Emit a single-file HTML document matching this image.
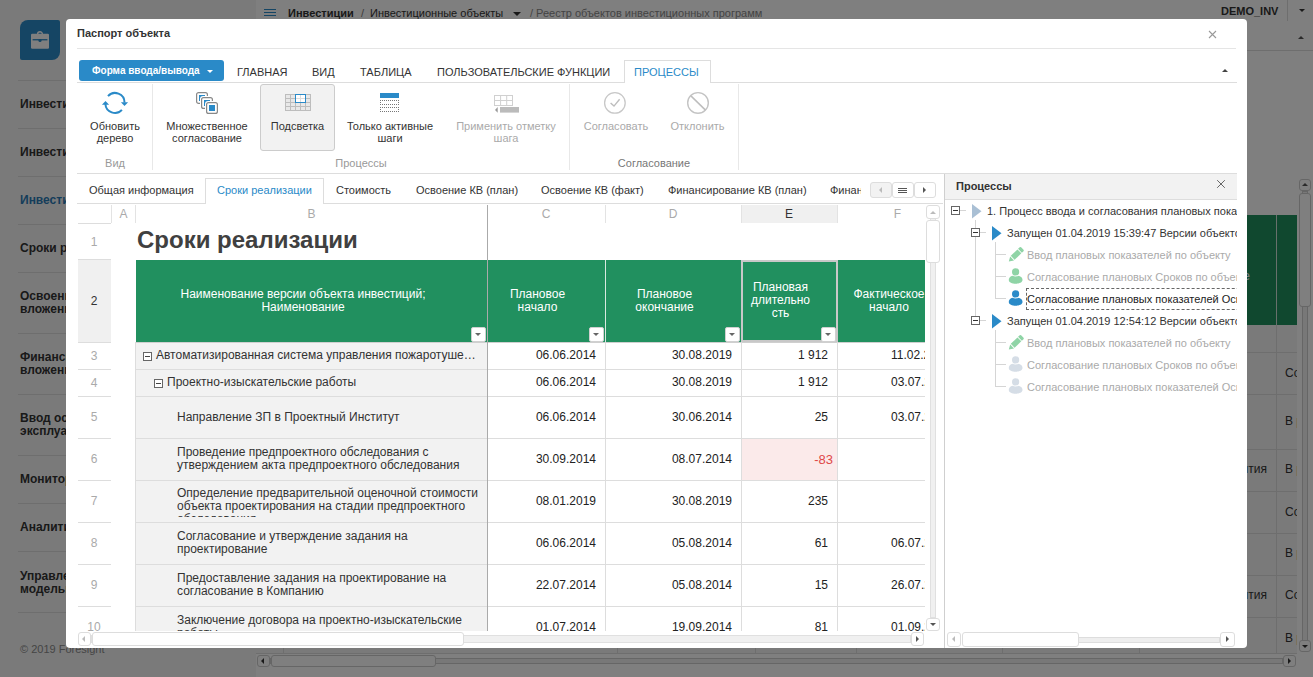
<!DOCTYPE html>
<html><head><meta charset="utf-8">
<style>
*{box-sizing:border-box;margin:0;padding:0}
html,body{width:1313px;height:677px;overflow:hidden;background:#fff;font-family:"Liberation Sans",sans-serif;color:#333}
.a{position:absolute}
.t{position:absolute;white-space:nowrap;font-size:11px;line-height:13px}
.b{font-weight:bold}
.hl{position:absolute;height:1px}
.vl{position:absolute;width:1px}
</style></head><body>
<!-- ============ BACKGROUND PAGE ============ -->
<div id="bg" class="a" style="left:0;top:0;width:1313px;height:677px">
  <div class="a" style="left:0;top:0;width:256px;height:677px;background:#f5f5f5"></div>
  <div class="a" style="left:20px;top:20px;width:40px;height:40px;background:#2a8ac8;border-radius:8px 2px 8px 2px"></div>
  <svg class="a" style="left:30px;top:30px" width="20" height="20" viewBox="0 0 20 20"><path d="M7.6 4.2A2.4 2.4 0 0 1 12.4 4.2" fill="none" stroke="#fff" stroke-width="1.4"/><rect x="1" y="3.7" width="18" height="15" rx="1.2" fill="#fff"/><rect x="2.6" y="9.1" width="14.8" height="1.3" fill="#2a8ac8"/><circle cx="10" cy="10.5" r="1.6" fill="#2a8ac8"/></svg>
  <div class="hl" style="left:18px;top:80px;width:238px;background:#ddd"></div>
  <div class="hl" style="left:18px;top:128px;width:238px;background:#ddd"></div>
  <div class="hl" style="left:18px;top:176px;width:238px;background:#ddd"></div>
  <div class="hl" style="left:18px;top:224px;width:238px;background:#ddd"></div>
  <div class="hl" style="left:18px;top:272px;width:238px;background:#ddd"></div>
  <div class="hl" style="left:18px;top:333px;width:238px;background:#ddd"></div>
  <div class="hl" style="left:18px;top:394px;width:238px;background:#ddd"></div>
  <div class="hl" style="left:18px;top:455px;width:238px;background:#ddd"></div>
  <div class="hl" style="left:18px;top:503px;width:238px;background:#ddd"></div>
  <div class="hl" style="left:18px;top:551px;width:238px;background:#ddd"></div>
  <div class="hl" style="left:18px;top:612px;width:238px;background:#ddd"></div>
  <div class="t b" style="left:20px;top:98px;font-size:12px">Инвестиционные программы</div>
  <div class="t b" style="left:20px;top:146px;font-size:12px">Инвестиционные проекты</div>
  <div class="t b" style="left:20px;top:194px;font-size:12px;color:#2a7ab5">Инвестиционные объекты</div>
  <div class="t b" style="left:20px;top:242px;font-size:12px">Сроки реализации</div>
  <div class="t b" style="left:20px;top:290px;font-size:12px">Освоение капитальных<br>вложений</div>
  <div class="t b" style="left:20px;top:351px;font-size:12px">Финансирование капитальных<br>вложений</div>
  <div class="t b" style="left:20px;top:412px;font-size:12px">Ввод основных фондов в<br>эксплуатацию</div>
  <div class="t b" style="left:20px;top:473px;font-size:12px">Мониторинг</div>
  <div class="t b" style="left:20px;top:521px;font-size:12px">Аналитика</div>
  <div class="t b" style="left:20px;top:570px;font-size:12px">Управление<br>моделью</div>
  <div class="t" style="left:20px;top:643px;font-size:11px;color:#8a8a8a">© 2019 Foresight</div>
  <!-- header -->
  <div class="hl" style="left:264px;top:9px;width:12px;height:1px;background:#2a8ac8"></div>
  <div class="hl" style="left:264px;top:12px;width:12px;height:1px;background:#2a8ac8"></div>
  <div class="hl" style="left:264px;top:15px;width:12px;height:1px;background:#2a8ac8"></div>
  <div class="t b" style="left:288px;top:7px">Инвестиции</div>
  <div class="t" style="left:361px;top:7px;color:#777">/</div>
  <div class="t" style="left:370px;top:7px">Инвестиционные объекты</div>
  <div class="a" style="left:513px;top:12px;border-left:4px solid transparent;border-right:4px solid transparent;border-top:4px solid #333"></div>
  <div class="t" style="left:530px;top:7px;color:#888">/ Реестр объектов инвестиционных программ</div>
  <div class="t b" style="left:1221px;top:5px">DEMO_INV</div>
  <div class="vl" style="left:1287px;top:0;height:21px;background:#ddd"></div>
  <div class="a" style="left:1299px;top:9px;border-left:3.5px solid transparent;border-right:3.5px solid transparent;border-top:3.5px solid #333"></div>
  <div class="a" style="left:1298px;top:36px;border-left:3.5px solid transparent;border-right:3.5px solid transparent;border-bottom:3.5px solid #555"></div>
  <div class="hl" style="left:256px;top:50px;width:1057px;background:#ddd"></div>
<!--BGT-->
<div class="a" style="left:256px;top:325px;width:1041px;height:328px;background:#f5f5f5"></div>
<div class="a" style="left:256px;top:215px;width:1041px;height:110px;background:#21905f"></div>
<div class="vl" style="left:1276px;top:215px;height:110px;background:#d0e0d8"></div>
<div class="vl" style="left:1276px;top:325px;height:328px;background:#ddd"></div>
<div class="vl" style="left:283px;top:325px;height:328px;background:#ddd"></div>
<div class="vl" style="left:617px;top:325px;height:328px;background:#ddd"></div>
<div class="vl" style="left:755px;top:325px;height:328px;background:#ddd"></div>
<div class="vl" style="left:856px;top:325px;height:328px;background:#ddd"></div>
<div class="vl" style="left:1002px;top:325px;height:328px;background:#ddd"></div>
<div class="vl" style="left:1139px;top:325px;height:328px;background:#ddd"></div>
<div class="hl" style="left:256px;top:352px;width:1041px;background:#ddd"></div>
<div class="hl" style="left:256px;top:394px;width:1041px;background:#ddd"></div>
<div class="hl" style="left:256px;top:449px;width:1041px;background:#ddd"></div>
<div class="hl" style="left:256px;top:491px;width:1041px;background:#ddd"></div>
<div class="hl" style="left:256px;top:533px;width:1041px;background:#ddd"></div>
<div class="hl" style="left:256px;top:575px;width:1041px;background:#ddd"></div>
<div class="hl" style="left:256px;top:617px;width:1041px;background:#ddd"></div>
<div class="hl" style="left:256px;top:653px;width:1041px;background:#ddd"></div>
<div class="a" style="left:1100px;top:269px;width:176px;height:14px;overflow:hidden"><div class="t" style="right:26px;top:0;font-size:12px;line-height:14px;color:#fff">Фактическое</div></div>
<div class="a" style="left:1277px;top:325px;width:20px;height:328px;overflow:hidden">
<div class="t" style="left:8px;top:41px;font-size:12px;line-height:14px;color:#333">Согласование</div>
<div class="t" style="left:8px;top:89px;font-size:12px;line-height:14px;color:#333">В работе</div>
<div class="t" style="left:8px;top:137px;font-size:12px;line-height:14px;color:#333">В работе</div>
<div class="t" style="left:8px;top:180px;font-size:12px;line-height:14px;color:#333">Согласование</div>
<div class="t" style="left:8px;top:221px;font-size:12px;line-height:14px;color:#333">В работе</div>
<div class="t" style="left:8px;top:263px;font-size:12px;line-height:14px;color:#333">Согласование</div>
<div class="t" style="left:8px;top:306px;font-size:12px;line-height:14px;color:#333">В работе</div>
</div>
<div class="a" style="left:1100px;top:325px;width:176px;height:328px;overflow:hidden">
<div class="t" style="right:9px;top:137px;font-size:12px;line-height:14px;color:#333">Ввод объекта развития</div>
<div class="t" style="right:9px;top:263px;font-size:12px;line-height:14px;color:#333">Ввод объекта развития</div>
</div>
<div class="a" style="left:1299px;top:179px;width:12px;height:473px">
<div class="a" style="left:3px;top:12px;width:6px;height:450px;background:#f0f0f0;border:1px solid #ccc"></div>
<div class="a" style="left:0;top:0;width:12px;height:12px;background:#fff;border:1px solid #ccc;border-radius:3px"></div>
<div class="a" style="left:0;top:14px;width:12px;height:114px;background:#fff;border:1px solid #ccc;border-radius:3px"></div>
<div class="a" style="left:0;top:461px;width:12px;height:12px;background:#fff;border:1px solid #ccc;border-radius:3px"></div>
<div class="a" style="left:3px;top:4px;border-left:3px solid transparent;border-right:3px solid transparent;border-bottom:3px solid #555"></div>
<div class="a" style="left:3px;top:466px;border-left:3px solid transparent;border-right:3px solid transparent;border-top:3px solid #333"></div>
</div>
<div class="a" style="left:257px;top:655px;width:1039px;height:12px">
<div class="a" style="left:13px;top:3px;width:1013px;height:6px;background:#f0f0f0;border:1px solid #ccc"></div>
<div class="a" style="left:0;top:0;width:13px;height:12px;background:#fff;border:1px solid #ccc;border-radius:3px"></div>
<div class="a" style="left:14px;top:0;width:165px;height:12px;background:#fff;border:1px solid #ccc;border-radius:3px"></div>
<div class="a" style="left:1026px;top:0;width:13px;height:12px;background:#fff;border:1px solid #ccc;border-radius:3px"></div>
<div class="a" style="left:4px;top:3px;border-top:3px solid transparent;border-bottom:3px solid transparent;border-right:3px solid #333"></div>
<div class="a" style="left:1031px;top:3px;border-top:3px solid transparent;border-bottom:3px solid transparent;border-left:3px solid #333"></div>
</div>
<!--/BGT-->
</div>
<div class="a" style="left:0;top:0;width:1313px;height:677px;background:rgba(0,0,0,.5)"></div>

<!-- ============ MODAL ============ -->

<div id="modal" class="a" style="left:66px;top:19px;width:1181px;height:629px;background:#fff;border-radius:4px;overflow:hidden"></div>
<div id="mc" class="a" style="left:0;top:0;width:1247px;height:648px;overflow:hidden">
  <div class="t b" style="left:77px;top:27px">Паспорт объекта</div>
  <svg class="a" style="left:1208px;top:30px" width="9" height="9" viewBox="0 0 9 9"><path d="M1 1L8 8M8 1L1 8" stroke="#999" stroke-width="1.1"/></svg>
  <div class="hl" style="left:77px;top:48px;width:1159px;background:#e5e5e5"></div>
  <!-- form button -->
  <div class="a" style="left:79px;top:60px;width:145px;height:21px;background:#2a8ac8;border-radius:3px"></div>
  <div class="t b" style="left:92px;top:64px;font-size:10px;color:#fff">Форма ввода/вывода</div>
  <div class="a" style="left:207px;top:70px;border-left:3.5px solid transparent;border-right:3.5px solid transparent;border-top:3.5px solid #fff"></div>
  <!-- ribbon tabs -->
  <div class="a" style="left:624px;top:60px;width:87px;height:23px;background:#fff;border:1px solid #ddd;border-bottom:none"></div>
  <div class="hl" style="left:77px;top:82px;width:547px;background:#ddd"></div>
  <div class="hl" style="left:711px;top:82px;width:526px;background:#ddd"></div>
  <div class="t" style="left:237px;top:66px">ГЛАВНАЯ</div>
  <div class="t" style="left:312px;top:66px">ВИД</div>
  <div class="t" style="left:360px;top:66px">ТАБЛИЦА</div>
  <div class="t" style="left:437px;top:66px">ПОЛЬЗОВАТЕЛЬСКИЕ ФУНКЦИИ</div>
  <div class="t" style="left:634px;top:66px;color:#2a8ac8">ПРОЦЕССЫ</div>
  <div class="a" style="left:1222px;top:69px;border-left:3.2px solid transparent;border-right:3.2px solid transparent;border-bottom:3.2px solid #444"></div>
  <!-- ribbon -->
  <div class="vl" style="left:152px;top:84px;height:86px;background:#e8e8e8"></div>
  <div class="vl" style="left:569px;top:84px;height:86px;background:#e8e8e8"></div>
  <div class="vl" style="left:738px;top:84px;height:86px;background:#e8e8e8"></div>
  <div class="hl" style="left:77px;top:173px;width:1160px;background:#ddd"></div>
  <div class="a" style="left:260px;top:84px;width:75px;height:67px;background:#f2f2f2;border:1px solid #ccc;border-radius:3px"></div>
  <div class="t" style="left:76px;top:120px;width:78px;text-align:center;line-height:12px">Обновить<br>дерево</div>
  <div class="t" style="left:157px;top:120px;width:100px;text-align:center;line-height:12px">Множественное<br>согласование</div>
  <div class="t" style="left:260px;top:120px;width:75px;text-align:center;line-height:12px">Подсветка</div>
  <div class="t" style="left:340px;top:120px;width:100px;text-align:center;line-height:12px">Только активные<br>шаги</div>
  <div class="t" style="left:450px;top:120px;width:112px;text-align:center;line-height:12px;color:#aaa">Применить отметку<br>шага</div>
  <div class="t" style="left:576px;top:120px;width:80px;text-align:center;line-height:12px;color:#aaa">Согласовать</div>
  <div class="t" style="left:660px;top:120px;width:75px;text-align:center;line-height:12px;color:#aaa">Отклонить</div>
  <div class="t" style="left:76px;top:157px;width:78px;text-align:center;color:#999">Вид</div>
  <div class="t" style="left:311px;top:157px;width:100px;text-align:center;color:#999">Процессы</div>
  <div class="t" style="left:604px;top:157px;width:100px;text-align:center;color:#777">Согласование</div>
  <!-- icons -->
  <svg class="a" style="left:98px;top:88px" width="34" height="30" viewBox="0 0 34 30">
    <path d="M10 8.1A9.5 9.5 0 0 1 26.5 14.6" fill="none" stroke="#2a8ac8" stroke-width="2"/>
    <path d="M22.9 14.3H30.1L26.5 18Z" fill="#2a8ac8"/>
    <path d="M23.9 21.8A9.5 9.5 0 0 1 7.4 16" fill="none" stroke="#2a8ac8" stroke-width="2"/>
    <path d="M3.9 16.7H11.1L7.5 13Z" fill="#2a8ac8"/>
  </svg>
  <svg class="a" style="left:195px;top:91px" width="24" height="24" viewBox="0 0 24 24"><rect x="1.6" y="1.6" width="10.8" height="10.8" rx="2" fill="#fff" stroke="#888" stroke-width="1.2"/><rect x="4" y="4" width="6" height="6" fill="#2a8ac8"/><rect x="5" y="5" width="14" height="14" rx="3" fill="#fff"/><rect x="6.6" y="6.6" width="10.8" height="10.8" rx="2" fill="#fff" stroke="#888" stroke-width="1.2"/><rect x="9" y="9" width="6" height="6" fill="#2a8ac8"/><rect x="10" y="10" width="14" height="14" rx="3" fill="#fff"/><rect x="11.6" y="11.6" width="10.8" height="10.8" rx="2" fill="#fff" stroke="#888" stroke-width="1.2"/><rect x="14" y="14" width="6" height="6" fill="#2a8ac8"/></svg>
  <svg class="a" style="left:285px;top:94px" width="27" height="18" viewBox="0 0 27 18">
    <rect x="0" y="0" width="26" height="17" fill="#bdbdbd"/>
    <g fill="#e8e8e8">
      <rect x="1" y="1" width="4" height="3"/><rect x="6" y="1" width="4" height="3"/><rect x="11" y="1" width="4" height="3"/><rect x="16" y="1" width="4" height="3"/><rect x="21" y="1" width="4" height="3"/>
      <rect x="1" y="5" width="4" height="3"/><rect x="6" y="5" width="4" height="3"/><rect x="11" y="5" width="4" height="3"/><rect x="16" y="5" width="4" height="3"/><rect x="21" y="5" width="4" height="3"/>
      <rect x="1" y="9" width="4" height="3"/><rect x="6" y="9" width="4" height="3"/><rect x="11" y="9" width="4" height="3"/><rect x="16" y="9" width="4" height="3"/><rect x="21" y="9" width="4" height="3"/>
      <rect x="1" y="13" width="4" height="3"/><rect x="6" y="13" width="4" height="3"/><rect x="11" y="13" width="4" height="3"/><rect x="16" y="13" width="4" height="3"/><rect x="21" y="13" width="4" height="3"/>
    </g>
    <rect x="10.5" y="0.5" width="10" height="8" fill="#fff" stroke="#2a8ac8"/>
    <path d="M15.5 1V8M11 4.5H20" stroke="#ddd"/>
  </svg>
  <svg class="a" style="left:380px;top:93px" width="20" height="20" viewBox="0 0 20 20"><rect x="0" y="0" width="19" height="5" fill="#2a8ac8"/><g fill="#777"><rect x="0" y="7" width="1" height="1"/><rect x="2" y="7" width="1" height="1"/><rect x="4" y="7" width="1" height="1"/><rect x="6" y="7" width="1" height="1"/><rect x="8" y="7" width="1" height="1"/><rect x="10" y="7" width="1" height="1"/><rect x="12" y="7" width="1" height="1"/><rect x="14" y="7" width="1" height="1"/><rect x="16" y="7" width="1" height="1"/><rect x="18" y="7" width="1" height="1"/><rect x="0" y="11" width="1" height="1"/><rect x="2" y="11" width="1" height="1"/><rect x="4" y="11" width="1" height="1"/><rect x="6" y="11" width="1" height="1"/><rect x="8" y="11" width="1" height="1"/><rect x="10" y="11" width="1" height="1"/><rect x="12" y="11" width="1" height="1"/><rect x="14" y="11" width="1" height="1"/><rect x="16" y="11" width="1" height="1"/><rect x="18" y="11" width="1" height="1"/><rect x="0" y="14" width="1" height="1"/><rect x="2" y="14" width="1" height="1"/><rect x="4" y="14" width="1" height="1"/><rect x="6" y="14" width="1" height="1"/><rect x="8" y="14" width="1" height="1"/><rect x="10" y="14" width="1" height="1"/><rect x="12" y="14" width="1" height="1"/><rect x="14" y="14" width="1" height="1"/><rect x="16" y="14" width="1" height="1"/><rect x="18" y="14" width="1" height="1"/><rect x="0" y="18" width="1" height="1"/><rect x="2" y="18" width="1" height="1"/><rect x="4" y="18" width="1" height="1"/><rect x="6" y="18" width="1" height="1"/><rect x="8" y="18" width="1" height="1"/><rect x="10" y="18" width="1" height="1"/><rect x="12" y="18" width="1" height="1"/><rect x="14" y="18" width="1" height="1"/><rect x="16" y="18" width="1" height="1"/><rect x="18" y="18" width="1" height="1"/><rect x="0" y="9" width="1" height="1"/><rect x="18" y="9" width="1" height="1"/><rect x="0" y="16" width="1" height="1"/><rect x="18" y="16" width="1" height="1"/></g></svg>
  <svg class="a" style="left:493px;top:94px" width="27" height="20" viewBox="0 0 27 20"><g fill="none" stroke="#d0d0d0"><rect x="1.5" y="1.5" width="18" height="10"/><path d="M7.6 2V11M13.7 2V11M2 6.5H19"/></g><rect x="7" y="13" width="19" height="5.6" fill="#bbb"/><path d="M4.7 13V18.8L2 15.9Z" fill="#999"/></svg>
  <svg class="a" style="left:600px;top:89px" width="30" height="28" viewBox="0 0 30 28"><circle cx="14.9" cy="13.9" r="10.3" fill="none" stroke="#c8c8c8" stroke-width="1.3"/><path d="M10.6 14L14 17.1L19.6 10.2" fill="none" stroke="#bdbdbd" stroke-width="1.4"/></svg>
  <svg class="a" style="left:683px;top:89px" width="30" height="28" viewBox="0 0 30 28"><circle cx="15" cy="13.9" r="10.3" fill="none" stroke="#c4c4c4" stroke-width="1.4"/><path d="M7.9 6.9L22.5 21.1" stroke="#bdbdbd" stroke-width="1.5"/></svg>
  <!-- sheet tabs -->
  <div class="a" style="left:205px;top:178px;width:119px;height:26px;background:#fff;border:1px solid #ddd;border-bottom:none"></div>
  <div class="hl" style="left:77px;top:203px;width:128px;background:#ddd"></div>
  <div class="hl" style="left:324px;top:203px;width:619px;background:#ddd"></div>
  <div class="t" style="left:89px;top:184px">Общая информация</div>
  <div class="t" style="left:217px;top:184px;color:#2a8ac8">Сроки реализации</div>
  <div class="t" style="left:336px;top:184px">Стоимость</div>
  <div class="t" style="left:416px;top:184px">Освоение КВ (план)</div>
  <div class="t" style="left:541px;top:184px">Освоение КВ (факт)</div>
  <div class="t" style="left:668px;top:184px">Финансирование КВ (план)</div>
  <div class="a" style="left:830px;top:180px;width:31px;height:20px;overflow:hidden"><div class="t" style="left:0;top:4px">Финансирование КВ (факт)</div></div>
  <div class="a" style="left:870px;top:182px;width:22px;height:16px;background:#f2f2f2;border:1px solid #ddd;border-radius:3px"></div>
  <div class="a" style="left:892px;top:182px;width:22px;height:16px;background:#fff;border:1px solid #ddd;border-radius:3px"></div>
  <div class="a" style="left:914px;top:182px;width:22px;height:16px;background:#fff;border:1px solid #ddd;border-radius:3px"></div>
  <div class="a" style="left:879px;top:187px;border-top:3px solid transparent;border-bottom:3px solid transparent;border-right:3px solid #bbb"></div>
  <div class="hl" style="left:898px;top:188px;width:9px;height:1px;background:#555"></div>
  <div class="hl" style="left:898px;top:190px;width:9px;height:1px;background:#555"></div>
  <div class="hl" style="left:898px;top:192px;width:9px;height:1px;background:#555"></div>
  <div class="a" style="left:923px;top:187px;border-top:3px solid transparent;border-bottom:3px solid transparent;border-left:3px solid #555"></div>
<!--GRID-->
<div class="a" style="left:77px;top:204px;width:848px;height:427px;overflow:hidden">
<div class="a" style="left:664px;top:1px;width:96px;height:18px;background:#f0f0f0"></div>
<div class="a" style="left:1px;top:19px;width:33px;height:1px;background:#ddd"></div>
<div class="a" style="left:34px;top:1px;width:1px;height:18px;background:#e3e3e3"></div>
<div class="a" style="left:58px;top:1px;width:1px;height:18px;background:#e3e3e3"></div>
<div class="a" style="left:528px;top:1px;width:1px;height:18px;background:#e3e3e3"></div>
<div class="a" style="left:664px;top:1px;width:1px;height:18px;background:#e3e3e3"></div>
<div class="a" style="left:760px;top:1px;width:1px;height:18px;background:#e3e3e3"></div>
<div class="t" style="left:34px;top:3px;width:25px;text-align:center;font-size:12px;line-height:14px;color:#aaa">A</div>
<div class="t" style="left:59px;top:3px;width:351px;text-align:center;font-size:12px;line-height:14px;color:#aaa">B</div>
<div class="t" style="left:410px;top:3px;width:118px;text-align:center;font-size:12px;line-height:14px;color:#aaa">C</div>
<div class="t" style="left:528px;top:3px;width:136px;text-align:center;font-size:12px;line-height:14px;color:#aaa">D</div>
<div class="t" style="left:664px;top:3px;width:96px;text-align:center;font-size:12px;line-height:14px;color:#333">E</div>
<div class="t" style="left:760px;top:3px;width:121px;text-align:center;font-size:12px;line-height:14px;color:#aaa">F</div>
<div class="a" style="left:1px;top:56px;width:33px;height:82px;background:#f0f0f0"></div>
<div class="t" style="left:0px;top:31px;width:34px;text-align:center;font-size:12px;line-height:14px;color:#aaa">1</div>
<div class="a" style="left:1px;top:55px;width:33px;height:1px;background:#ddd"></div>
<div class="t" style="left:0px;top:90px;width:34px;text-align:center;font-size:12px;line-height:14px;color:#333">2</div>
<div class="a" style="left:1px;top:138px;width:33px;height:1px;background:#ddd"></div>
<div class="t" style="left:0px;top:145px;width:34px;text-align:center;font-size:12px;line-height:14px;color:#aaa">3</div>
<div class="a" style="left:1px;top:165px;width:33px;height:1px;background:#ddd"></div>
<div class="t" style="left:0px;top:172px;width:34px;text-align:center;font-size:12px;line-height:14px;color:#aaa">4</div>
<div class="a" style="left:1px;top:192px;width:33px;height:1px;background:#ddd"></div>
<div class="t" style="left:0px;top:206px;width:34px;text-align:center;font-size:12px;line-height:14px;color:#aaa">5</div>
<div class="a" style="left:1px;top:234px;width:33px;height:1px;background:#ddd"></div>
<div class="t" style="left:0px;top:248px;width:34px;text-align:center;font-size:12px;line-height:14px;color:#aaa">6</div>
<div class="a" style="left:1px;top:276px;width:33px;height:1px;background:#ddd"></div>
<div class="t" style="left:0px;top:290px;width:34px;text-align:center;font-size:12px;line-height:14px;color:#aaa">7</div>
<div class="a" style="left:1px;top:318px;width:33px;height:1px;background:#ddd"></div>
<div class="t" style="left:0px;top:332px;width:34px;text-align:center;font-size:12px;line-height:14px;color:#aaa">8</div>
<div class="a" style="left:1px;top:360px;width:33px;height:1px;background:#ddd"></div>
<div class="t" style="left:0px;top:374px;width:34px;text-align:center;font-size:12px;line-height:14px;color:#aaa">9</div>
<div class="a" style="left:1px;top:402px;width:33px;height:1px;background:#ddd"></div>
<div class="t" style="left:0px;top:416px;width:34px;text-align:center;font-size:12px;line-height:14px;color:#aaa">10</div>
<div class="a" style="left:1px;top:444px;width:33px;height:1px;background:#ddd"></div>
<div class="a" style="left:59px;top:138px;width:351px;height:306px;background:#f2f2f2"></div>
<div class="a" style="left:59px;top:56px;width:789px;height:82px;background:#21905f"></div>
<div class="a" style="left:59px;top:165px;width:789px;height:1px;background:#ddd"></div>
<div class="a" style="left:59px;top:192px;width:789px;height:1px;background:#ddd"></div>
<div class="a" style="left:59px;top:234px;width:789px;height:1px;background:#ddd"></div>
<div class="a" style="left:59px;top:276px;width:789px;height:1px;background:#ddd"></div>
<div class="a" style="left:59px;top:318px;width:789px;height:1px;background:#ddd"></div>
<div class="a" style="left:59px;top:360px;width:789px;height:1px;background:#ddd"></div>
<div class="a" style="left:59px;top:402px;width:789px;height:1px;background:#ddd"></div>
<div class="a" style="left:59px;top:444px;width:789px;height:1px;background:#ddd"></div>
<div class="a" style="left:59px;top:138px;width:789px;height:1px;background:#cfcfcf"></div>
<div class="a" style="left:528px;top:56px;width:1px;height:82px;background:#d8e8e0"></div>
<div class="a" style="left:528px;top:138px;width:1px;height:306px;background:#ddd"></div>
<div class="a" style="left:664px;top:56px;width:1px;height:82px;background:#d8e8e0"></div>
<div class="a" style="left:664px;top:138px;width:1px;height:306px;background:#ddd"></div>
<div class="a" style="left:760px;top:56px;width:1px;height:82px;background:#d8e8e0"></div>
<div class="a" style="left:760px;top:138px;width:1px;height:306px;background:#ddd"></div>
<div class="a" style="left:58px;top:138px;width:1px;height:306px;background:#ddd"></div>
<div class="a" style="left:410px;top:1px;width:1px;height:443px;background:#aaa"></div>
<div class="a" style="left:664px;top:56px;width:97px;height:82px;border:2px solid #c8c8c8"></div>
<div class="t" style="left:59px;top:84px;width:334px;color:#fff;font-size:12px;line-height:13px;text-align:center">Наименование версии объекта инвестиций;<br>Наименование</div>
<div class="t" style="left:410px;top:84px;width:101px;color:#fff;font-size:12px;line-height:13px;text-align:center">Плановое<br>начало</div>
<div class="t" style="left:528px;top:84px;width:119px;color:#fff;font-size:12px;line-height:13px;text-align:center">Плановое<br>окончание</div>
<div class="t" style="left:664px;top:77px;width:79px;color:#fff;font-size:12px;line-height:13px;text-align:center">Плановая<br>длительно<br>сть</div>
<div class="t" style="left:760px;top:84px;width:104px;color:#fff;font-size:12px;line-height:13px;text-align:center">Фактическое<br>начало</div>
<div class="a" style="left:394px;top:123px;width:15px;height:15px;background:#fff;border:1px solid #d0d0d0;border-radius:2px"></div>
<div class="a" style="left:398px;top:129px;border-left:3.5px solid transparent;border-right:3.5px solid transparent;border-top:3.5px solid #666"></div>
<div class="a" style="left:512px;top:123px;width:15px;height:15px;background:#fff;border:1px solid #d0d0d0;border-radius:2px"></div>
<div class="a" style="left:516px;top:129px;border-left:3.5px solid transparent;border-right:3.5px solid transparent;border-top:3.5px solid #666"></div>
<div class="a" style="left:648px;top:123px;width:15px;height:15px;background:#fff;border:1px solid #d0d0d0;border-radius:2px"></div>
<div class="a" style="left:652px;top:129px;border-left:3.5px solid transparent;border-right:3.5px solid transparent;border-top:3.5px solid #666"></div>
<div class="a" style="left:744px;top:123px;width:15px;height:15px;background:#fff;border:1px solid #d0d0d0;border-radius:2px"></div>
<div class="a" style="left:748px;top:129px;border-left:3.5px solid transparent;border-right:3.5px solid transparent;border-top:3.5px solid #666"></div>
<div class="t" style="left:60px;top:22px;font-size:24px;line-height:28px;font-weight:bold;color:#404040">Сроки реализации</div>
<div class="a" style="left:66px;top:148px;width:9px;height:9px;border:1px solid #666;background:#fff"></div>
<div class="a" style="left:68px;top:152px;width:5px;height:1px;background:#444"></div>
<div class="t" style="left:79px;top:145px;font-size:12px;line-height:13px;color:#333">Автоматизированная система управления пожаротуше…</div>
<div class="t" style="left:410px;top:144px;width:109px;text-align:right;font-size:12px;line-height:14px;color:#222">06.06.2014</div>
<div class="t" style="left:528px;top:144px;width:127px;text-align:right;font-size:12px;line-height:14px;color:#222">30.08.2019</div>
<div class="t" style="left:664px;top:144px;width:87px;text-align:right;font-size:12px;line-height:14px;color:#222">1 912</div>
<div class="a" style="left:760px;top:144px;width:88px;height:14px;overflow:hidden"><div class="t" style="left:54px;top:0;font-size:12px;line-height:14px;color:#222">11.02.2019</div></div>
<div class="a" style="left:77px;top:175px;width:9px;height:9px;border:1px solid #666;background:#fff"></div>
<div class="a" style="left:79px;top:179px;width:5px;height:1px;background:#444"></div>
<div class="t" style="left:90px;top:172px;font-size:12px;line-height:13px;color:#333">Проектно-изыскательские работы</div>
<div class="t" style="left:410px;top:171px;width:109px;text-align:right;font-size:12px;line-height:14px;color:#222">06.06.2014</div>
<div class="t" style="left:528px;top:171px;width:127px;text-align:right;font-size:12px;line-height:14px;color:#222">30.08.2019</div>
<div class="t" style="left:664px;top:171px;width:87px;text-align:right;font-size:12px;line-height:14px;color:#222">1 912</div>
<div class="a" style="left:760px;top:171px;width:88px;height:14px;overflow:hidden"><div class="t" style="left:54px;top:0;font-size:12px;line-height:14px;color:#222">03.07.2014</div></div>
<div class="t" style="left:100px;top:207px;font-size:12px;line-height:13px;color:#333">Направление ЗП в Проектный Институт</div>
<div class="t" style="left:410px;top:206px;width:109px;text-align:right;font-size:12px;line-height:14px;color:#222">06.06.2014</div>
<div class="t" style="left:528px;top:206px;width:127px;text-align:right;font-size:12px;line-height:14px;color:#222">30.06.2014</div>
<div class="t" style="left:664px;top:206px;width:87px;text-align:right;font-size:12px;line-height:14px;color:#222">25</div>
<div class="a" style="left:760px;top:206px;width:88px;height:14px;overflow:hidden"><div class="t" style="left:54px;top:0;font-size:12px;line-height:14px;color:#222">03.07.2014</div></div>
<div class="t" style="left:100px;top:242px;font-size:12px;line-height:13px;color:#333">Проведение предпроектного обследования с<br>утверждением акта предпроектного обследования</div>
<div class="a" style="left:665px;top:235px;width:95px;height:41px;background:#fbeaea"></div>
<div class="t" style="left:410px;top:248px;width:109px;text-align:right;font-size:12px;line-height:14px;color:#222">30.09.2014</div>
<div class="t" style="left:528px;top:248px;width:127px;text-align:right;font-size:12px;line-height:14px;color:#222">08.07.2014</div>
<div class="t" style="left:664px;top:249px;width:92px;text-align:right;font-size:13px;line-height:14px;color:#e04848">-83</div>
<div class="a" style="left:100px;top:279px;width:305px;height:34px;overflow:hidden"><div class="t" style="left:0;top:4px;font-size:12px;line-height:13px;color:#333">Определение предварительной оценочной стоимости<br>объекта проектирования на стадии предпроектного<br>обследования</div></div>
<div class="t" style="left:410px;top:290px;width:109px;text-align:right;font-size:12px;line-height:14px;color:#222">08.01.2019</div>
<div class="t" style="left:528px;top:290px;width:127px;text-align:right;font-size:12px;line-height:14px;color:#222">30.08.2019</div>
<div class="t" style="left:664px;top:290px;width:87px;text-align:right;font-size:12px;line-height:14px;color:#222">235</div>
<div class="t" style="left:100px;top:326px;font-size:12px;line-height:13px;color:#333">Согласование и утверждение задания на<br>проектирование</div>
<div class="t" style="left:410px;top:332px;width:109px;text-align:right;font-size:12px;line-height:14px;color:#222">06.06.2014</div>
<div class="t" style="left:528px;top:332px;width:127px;text-align:right;font-size:12px;line-height:14px;color:#222">05.08.2014</div>
<div class="t" style="left:664px;top:332px;width:87px;text-align:right;font-size:12px;line-height:14px;color:#222">61</div>
<div class="a" style="left:760px;top:332px;width:88px;height:14px;overflow:hidden"><div class="t" style="left:54px;top:0;font-size:12px;line-height:14px;color:#222">06.07.2014</div></div>
<div class="t" style="left:100px;top:368px;font-size:12px;line-height:13px;color:#333">Предоставление задания на проектирование на<br>согласование в Компанию</div>
<div class="t" style="left:410px;top:374px;width:109px;text-align:right;font-size:12px;line-height:14px;color:#222">22.07.2014</div>
<div class="t" style="left:528px;top:374px;width:127px;text-align:right;font-size:12px;line-height:14px;color:#222">05.08.2014</div>
<div class="t" style="left:664px;top:374px;width:87px;text-align:right;font-size:12px;line-height:14px;color:#222">15</div>
<div class="a" style="left:760px;top:374px;width:88px;height:14px;overflow:hidden"><div class="t" style="left:54px;top:0;font-size:12px;line-height:14px;color:#222">26.07.2014</div></div>
<div class="t" style="left:100px;top:410px;font-size:12px;line-height:13px;color:#333">Заключение договора на проектно-изыскательские<br>работы</div>
<div class="t" style="left:410px;top:416px;width:109px;text-align:right;font-size:12px;line-height:14px;color:#222">01.07.2014</div>
<div class="t" style="left:528px;top:416px;width:127px;text-align:right;font-size:12px;line-height:14px;color:#222">19.09.2014</div>
<div class="t" style="left:664px;top:416px;width:87px;text-align:right;font-size:12px;line-height:14px;color:#222">81</div>
<div class="a" style="left:760px;top:416px;width:88px;height:14px;overflow:hidden"><div class="t" style="left:54px;top:0;font-size:12px;line-height:14px;color:#222">01.09.2014</div></div>
</div>
<div class="a" style="left:926px;top:205px;width:14px;height:426px;">
<div class="a" style="left:4px;top:13px;width:6px;height:400px;background:#f0f0f0;border:1px solid #e0e0e0"></div>
<div class="a" style="left:0;top:0;width:14px;height:14px;background:#fff;border:1px solid #ddd;border-radius:3px"></div>
<div class="a" style="left:0;top:15px;width:14px;height:43px;background:#fff;border:1px solid #ddd;border-radius:3px"></div>
<div class="a" style="left:0;top:413px;width:14px;height:13px;background:#fff;border:1px solid #ddd;border-radius:3px"></div>
<div class="a" style="left:4px;top:6px;border-left:3px solid transparent;border-right:3px solid transparent;border-bottom:3px solid #bbb"></div>
<div class="a" style="left:4px;top:418px;border-left:3px solid transparent;border-right:3px solid transparent;border-top:3px solid #555"></div>
</div>
<div class="a" style="left:78px;top:632px;width:846px;height:14px;">
<div class="a" style="left:13px;top:3px;width:820px;height:8px;background:#f0f0f0;border:1px solid #e0e0e0"></div>
<div class="a" style="left:0;top:0;width:13px;height:14px;background:#fff;border:1px solid #ddd;border-radius:3px"></div>
<div class="a" style="left:14px;top:0;width:372px;height:14px;background:#fff;border:1px solid #ddd;border-radius:3px"></div>
<div class="a" style="left:833px;top:0;width:13px;height:14px;background:#fff;border:1px solid #ddd;border-radius:3px"></div>
<div class="a" style="left:4px;top:4px;border-top:3px solid transparent;border-bottom:3px solid transparent;border-right:3px solid #bbb"></div>
<div class="a" style="left:838px;top:4px;border-top:3px solid transparent;border-bottom:3px solid transparent;border-left:3px solid #555"></div>
</div>
<!--/GRID-->
<!--PANEL-->
<div class="vl" style="left:944px;top:174px;height:474px;background:#cfcfcf"></div>
<div class="a" style="left:945px;top:174px;width:292px;height:26px;background:#f2f2f2;border-bottom:1px solid #ddd"></div>
<div class="t b" style="left:956px;top:180px">Процессы</div>
<svg class="a" style="left:1216px;top:179px" width="10" height="10" viewBox="0 0 10 10"><path d="M1.2 1.2L8.8 8.8M8.8 1.2L1.2 8.8" stroke="#666" stroke-width="1"/></svg>
<div class="a" style="left:945px;top:200px;width:292px;height:430px;overflow:hidden">
<div class="a" style="left:15px;top:10px;width:6px;height:1px;background:#d5d5d5"></div>
<div class="a" style="left:30px;top:20px;width:1px;height:8px;background:#d5d5d5"></div>
<div class="a" style="left:30px;top:37px;width:1px;height:84px;background:#d5d5d5"></div>
<div class="a" style="left:35px;top:32px;width:6px;height:1px;background:#d5d5d5"></div>
<div class="a" style="left:35px;top:120px;width:6px;height:1px;background:#d5d5d5"></div>
<div class="a" style="left:50px;top:42px;width:1px;height:57px;background:#d5d5d5"></div>
<div class="a" style="left:50px;top:54px;width:11px;height:1px;background:#d5d5d5"></div>
<div class="a" style="left:50px;top:76px;width:11px;height:1px;background:#d5d5d5"></div>
<div class="a" style="left:50px;top:98px;width:11px;height:1px;background:#d5d5d5"></div>
<div class="a" style="left:50px;top:130px;width:1px;height:57px;background:#d5d5d5"></div>
<div class="a" style="left:50px;top:142px;width:11px;height:1px;background:#d5d5d5"></div>
<div class="a" style="left:50px;top:164px;width:11px;height:1px;background:#d5d5d5"></div>
<div class="a" style="left:50px;top:186px;width:11px;height:1px;background:#d5d5d5"></div>
<div class="a" style="left:6px;top:6px;width:9px;height:9px;border:1px solid #666;background:#fff"></div>
<div class="a" style="left:8px;top:10px;width:5px;height:1px;background:#333"></div>
<svg class="a" style="left:27px;top:4px" width="10" height="15" viewBox="0 0 10 15"><path d="M0 0L9.5 7.2L0 14.4Z" fill="#a9bfd4"/></svg>
<div class="t" style="left:42px;top:5px;color:#333">1. Процесс ввода и согласования плановых показателей</div>
<div class="a" style="left:26px;top:28px;width:9px;height:9px;border:1px solid #666;background:#fff"></div>
<div class="a" style="left:28px;top:32px;width:5px;height:1px;background:#333"></div>
<svg class="a" style="left:47px;top:26px" width="10" height="15" viewBox="0 0 10 15"><path d="M0 0L9.5 7.2L0 14.4Z" fill="#2a8ac8"/></svg>
<div class="t" style="left:62px;top:27px;color:#333">Запущен 01.04.2019 15:39:47 Версии объектов инвестиций</div>
<svg class="a" style="left:60px;top:44px" width="22" height="22" viewBox="0 0 22 22"><g transform="translate(3.8 17.6) rotate(-44)"><path d="M0 0L4.6 -2.75V2.75Z" fill="#8fd4a6"/><rect x="5.4" y="-2.75" width="9.3" height="5.5" fill="#8fd4a6"/><path d="M15.5 -2.75H17.8A1 1 0 0 1 18.8 -1.75V1.75A1 1 0 0 1 17.8 2.75H15.5Z" fill="#8fd4a6"/></g></svg>
<div class="t" style="left:82px;top:49px;color:#aaa">Ввод плановых показателей по объекту</div>
<svg class="a" style="left:63px;top:67px" width="16" height="18" viewBox="0 0 16 18"><path d="M0.8 13C0.8 10 3.5 8.6 7.6 8.6C11.7 8.6 14.5 10 14.5 13C14.5 15.5 11 16.7 7.6 16.7C4.2 16.7 0.8 15.5 0.8 13Z" fill="#8fd4a6"/><circle cx="7.6" cy="4.9" r="4.6" fill="#fff"/><circle cx="7.6" cy="4.9" r="3.6" fill="#8fd4a6"/></svg>
<div class="t" style="left:82px;top:71px;color:#aaa">Согласование плановых Сроков по объекту</div>
<svg class="a" style="left:63px;top:89px" width="16" height="18" viewBox="0 0 16 18"><path d="M0.8 13C0.8 10 3.5 8.6 7.6 8.6C11.7 8.6 14.5 10 14.5 13C14.5 15.5 11 16.7 7.6 16.7C4.2 16.7 0.8 15.5 0.8 13Z" fill="#2a8ac8"/><circle cx="7.6" cy="4.9" r="4.6" fill="#fff"/><circle cx="7.6" cy="4.9" r="3.6" fill="#2a8ac8"/></svg>
<div class="a" style="left:81px;top:88px;width:274px;height:22px;border:1px dashed #666"></div>
<div class="t" style="left:82px;top:93px;color:#222">Согласование плановых показателей Освоения КВ</div>
<div class="a" style="left:26px;top:116px;width:9px;height:9px;border:1px solid #666;background:#fff"></div>
<div class="a" style="left:28px;top:120px;width:5px;height:1px;background:#333"></div>
<svg class="a" style="left:47px;top:114px" width="10" height="15" viewBox="0 0 10 15"><path d="M0 0L9.5 7.2L0 14.4Z" fill="#2a8ac8"/></svg>
<div class="t" style="left:62px;top:115px;color:#333">Запущен 01.04.2019 12:54:12 Версии объектов инвестиций</div>
<svg class="a" style="left:60px;top:132px" width="22" height="22" viewBox="0 0 22 22"><g transform="translate(3.8 17.6) rotate(-44)"><path d="M0 0L4.6 -2.75V2.75Z" fill="#8fd4a6"/><rect x="5.4" y="-2.75" width="9.3" height="5.5" fill="#8fd4a6"/><path d="M15.5 -2.75H17.8A1 1 0 0 1 18.8 -1.75V1.75A1 1 0 0 1 17.8 2.75H15.5Z" fill="#8fd4a6"/></g></svg>
<div class="t" style="left:82px;top:137px;color:#aaa">Ввод плановых показателей по объекту</div>
<svg class="a" style="left:63px;top:155px" width="16" height="18" viewBox="0 0 16 18"><path d="M0.8 13C0.8 10 3.5 8.6 7.6 8.6C11.7 8.6 14.5 10 14.5 13C14.5 15.5 11 16.7 7.6 16.7C4.2 16.7 0.8 15.5 0.8 13Z" fill="#d5dde6"/><circle cx="7.6" cy="4.9" r="4.6" fill="#fff"/><circle cx="7.6" cy="4.9" r="3.6" fill="#d5dde6"/></svg>
<div class="t" style="left:82px;top:159px;color:#aaa">Согласование плановых Сроков по объекту</div>
<svg class="a" style="left:63px;top:177px" width="16" height="18" viewBox="0 0 16 18"><path d="M0.8 13C0.8 10 3.5 8.6 7.6 8.6C11.7 8.6 14.5 10 14.5 13C14.5 15.5 11 16.7 7.6 16.7C4.2 16.7 0.8 15.5 0.8 13Z" fill="#d5dde6"/><circle cx="7.6" cy="4.9" r="4.6" fill="#fff"/><circle cx="7.6" cy="4.9" r="3.6" fill="#d5dde6"/></svg>
<div class="t" style="left:82px;top:181px;color:#aaa">Согласование плановых показателей Освоения КВ</div>
</div>
<div class="a" style="left:947px;top:632px;width:288px;height:15px;">
<div class="a" style="left:15px;top:5px;width:258px;height:6px;background:#eee;border:1px solid #ddd"></div>
<div class="a" style="left:0;top:0;width:14px;height:15px;background:#fff;border:1px solid #ddd;border-radius:3px"></div>
<div class="a" style="left:15px;top:0;width:117px;height:15px;background:#fff;border:1px solid #ddd;border-radius:3px"></div>
<div class="a" style="left:273px;top:0;width:15px;height:15px;background:#fff;border:1px solid #ddd;border-radius:3px"></div>
<div class="a" style="left:5px;top:4px;border-top:3.5px solid transparent;border-bottom:3.5px solid transparent;border-right:3.5px solid #bbb"></div>
<div class="a" style="left:279px;top:4px;border-top:3.5px solid transparent;border-bottom:3.5px solid transparent;border-left:3.5px solid #555"></div>
</div>
<!--/PANEL-->
</div>

</body></html>
